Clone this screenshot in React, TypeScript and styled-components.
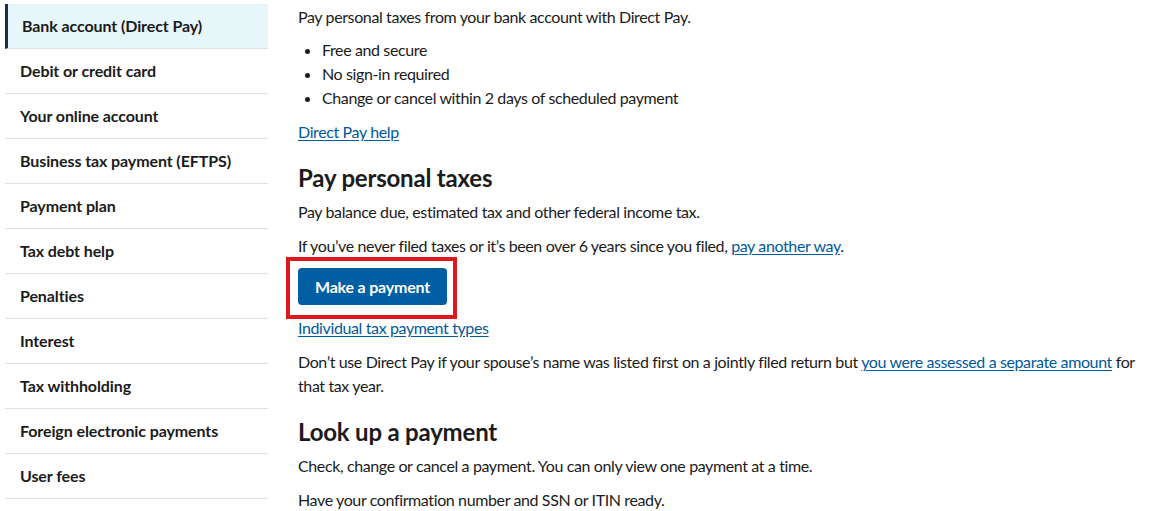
import React from 'react'
import styled, { createGlobalStyle } from 'styled-components'

const GlobalStyle = createGlobalStyle`
  * { box-sizing: border-box; }
  body {
    margin: 0;
    background: #fff;
    font-family: Lato, "Noto Sans", sans-serif;
    color: #1b1b1b;
  }
`

const Page = styled.div`
  display: flex;
  align-items: flex-start;
  gap: 30px;
  padding-left: 5px;
  width: 1169px;
  height: 511px;
  overflow: hidden;
`

const SideNav = styled.nav`
  width: 263px;
  flex-shrink: 0;
  margin-top: 4px;
  display: flex;
  flex-direction: column;
`

const NavItem = styled.a<{ $active?: boolean }>`
  display: flex;
  align-items: center;
  height: 45px;
  padding-left: ${p => (p.$active ? '14px' : '15px')};
  padding-bottom: 2px;
  border-left: ${p => (p.$active ? '3px solid #162e51' : 'none')};
  border-bottom: 1px solid #dfe1e2;
  background: ${p => (p.$active ? '#e7f6f8' : 'transparent')};
  font-size: 16px;
  font-weight: 700;
  letter-spacing: -0.1px;
  color: #1b1b1b;
  text-decoration: none;
`

const Main = styled.main`
  width: 860px;
  padding-top: 5px;
  font-size: 16px;
  line-height: 24px;
  letter-spacing: -0.38px;
`

const Para = styled.p<{ $tight?: boolean }>`
  margin: 0 0 ${p => (p.$tight ? '9px' : '10px')};
`

const List = styled.ul`
  margin: 0 0 10px;
  padding-left: 24px;
`

const Link = styled.a`
  color: #00599c;
  text-decoration: underline;
  text-underline-offset: 2px;
`

const Heading = styled.h2`
  margin: 19px 0 7px;
  font-size: 24px;
  line-height: 30px;
  font-weight: 700;
  letter-spacing: -0.2px;
`

const ButtonWrap = styled.div`
  position: relative;
  width: 149px;
  margin: 1px 0 11px;

  &::after {
    content: '';
    position: absolute;
    top: -11px;
    left: -12px;
    right: -10px;
    bottom: -14px;
    border: 4px solid #e0181e;
    pointer-events: none;
  }
`

const Button = styled.button`
  display: block;
  width: 149px;
  height: 37px;
  border: none;
  border-radius: 4px;
  background: #005ea2;
  color: #fff;
  font-family: Lato, "Noto Sans", sans-serif;
  font-size: 16px;
  font-weight: 700;
  letter-spacing: -0.2px;
  cursor: pointer;
`

const navItems = [
  'Bank account (Direct Pay)',
  'Debit or credit card',
  'Your online account',
  'Business tax payment (EFTPS)',
  'Payment plan',
  'Tax debt help',
  'Penalties',
  'Interest',
  'Tax withholding',
  'Foreign electronic payments',
  'User fees',
]

export default function App() {
  return (
    <>
      <GlobalStyle />
      <Page>
        <SideNav>
          {navItems.map((item, i) => (
            <NavItem key={item} href="#" $active={i === 0}>
              {item}
            </NavItem>
          ))}
        </SideNav>
        <Main>
          <Para $tight>Pay personal taxes from your bank account with Direct Pay.</Para>
          <List>
            <li>Free and secure</li>
            <li>No sign-in required</li>
            <li>Change or cancel within 2 days of scheduled payment</li>
          </List>
          <Para>
            <Link href="#">Direct Pay help</Link>
          </Para>
          <Heading>Pay personal taxes</Heading>
          <Para>Pay balance due, estimated tax and other federal income tax.</Para>
          <Para>
            If you’ve never filed taxes or it’s been over 6 years since you filed,{' '}
            <Link href="#">pay another way</Link>.
          </Para>
          <ButtonWrap>
            <Button>Make a payment</Button>
          </ButtonWrap>
          <Para>
            <Link href="#">Individual tax payment types</Link>
          </Para>
          <Para>
            Don’t use Direct Pay if your spouse’s name was listed first on a jointly filed return
            but <Link href="#">you were assessed a separate amount</Link> for
            <br />
            that tax year.
          </Para>
          <Heading>Look up a payment</Heading>
          <Para>Check, change or cancel a payment. You can only view one payment at a time.</Para>
          <Para>Have your confirmation number and SSN or ITIN ready.</Para>
        </Main>
      </Page>
    </>
  )
}
